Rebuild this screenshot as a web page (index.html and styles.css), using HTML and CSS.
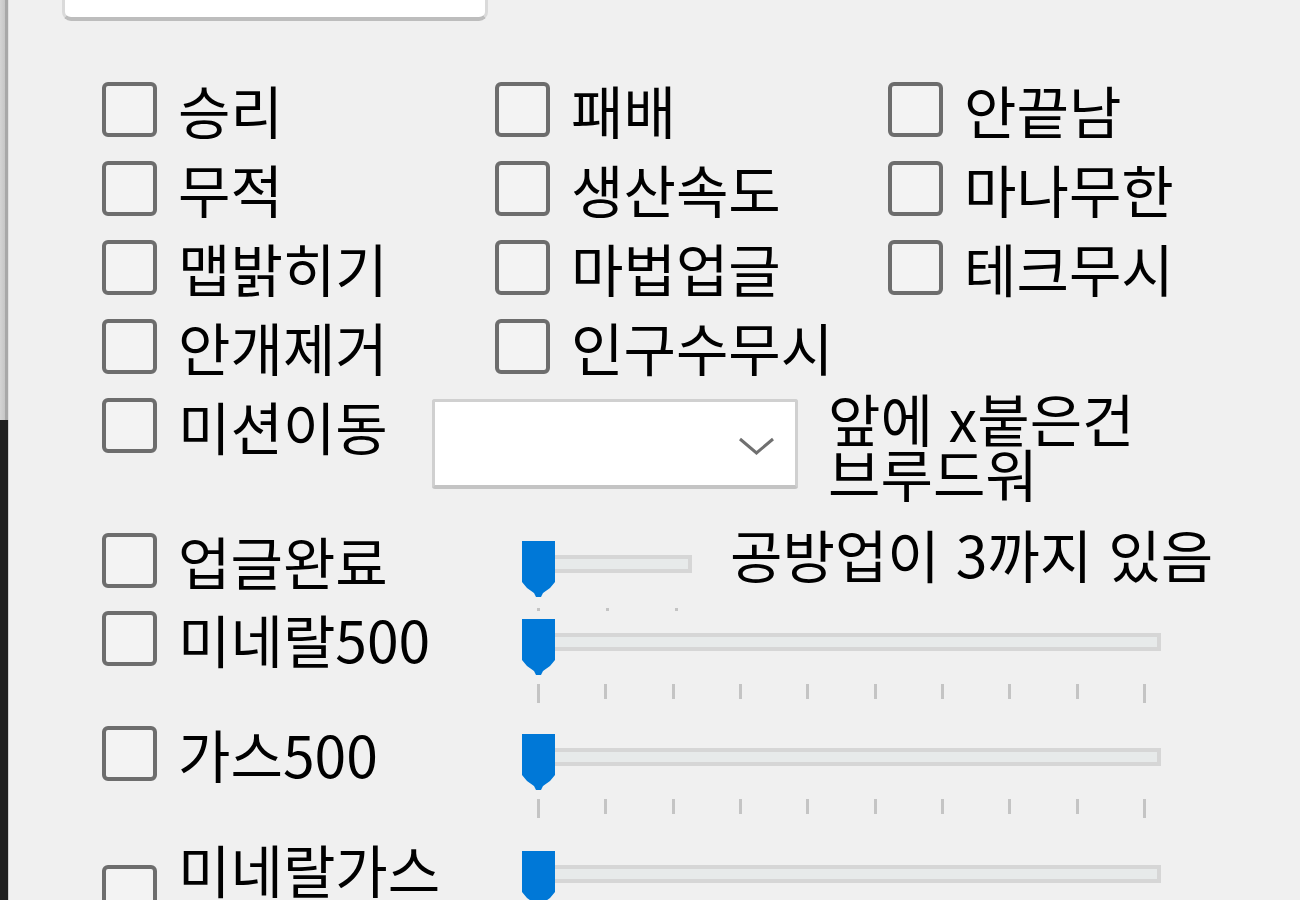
FILE: index.html
```html
<!DOCTYPE html>
<html lang="ko">
<head>
    <meta charset="UTF-8">
    <title>트레이너</title>
    <link rel="stylesheet" href="styles.css">
</head>
<body>
    <div class="window">
        <div class="edge">
            <div class="edge-top"></div>
            <div class="edge-bottom"></div>
        </div>

        <div class="panel">
            <div class="textbox"></div>

            <div class="options">
                <label class="check"><span class="box"></span><span>승리</span></label>
                <label class="check"><span class="box"></span><span>패배</span></label>
                <label class="check"><span class="box"></span><span>안끝남</span></label>
                <label class="check"><span class="box"></span><span>무적</span></label>
                <label class="check"><span class="box"></span><span>생산속도</span></label>
                <label class="check"><span class="box"></span><span>마나무한</span></label>
                <label class="check"><span class="box"></span><span>맵밝히기</span></label>
                <label class="check"><span class="box"></span><span>마법업글</span></label>
                <label class="check"><span class="box"></span><span>테크무시</span></label>
                <label class="check"><span class="box"></span><span>안개제거</span></label>
                <label class="check"><span class="box"></span><span>인구수무시</span></label>
            </div>

            <div class="row row-mission">
                <label class="check mission"><span class="box"></span><span>미션이동</span></label>
                <div class="combo">
                    <svg width="37" height="18" viewBox="0 0 37 18"><polyline points="2,2 18.5,16 35,2" fill="none" stroke="#707070" stroke-width="3"/></svg>
                </div>
                <p class="note">앞에 x붙은건<br>브루드워</p>
            </div>

            <div class="row row-upgrade">
                <label class="check slider-label"><span class="box"></span><span>업글완료</span></label>
                <div class="slider short">
                    <div class="rail">
                        <div class="track"></div>
                        <svg class="thumb" width="33" height="56" viewBox="0 0 33 56"><path d="M0 0H33V41L28 47L21 52L19 56H14L12 52L5 47L0 41Z" fill="#0078d7"/></svg>
                    </div>
                    <div class="ticks dots"><i></i><i></i><i></i></div>
                </div>
                <p class="hint">공방업이 3까지 있음</p>
            </div>

            <div class="row row-slider">
                <label class="check slider-label"><span class="box"></span><span>미네랄500</span></label>
                <div class="slider long">
                    <div class="rail">
                        <div class="track"></div>
                        <svg class="thumb" width="33" height="56" viewBox="0 0 33 56"><path d="M0 0H33V41L28 47L21 52L19 56H14L12 52L5 47L0 41Z" fill="#0078d7"/></svg>
                    </div>
                    <div class="ticks"><i></i><i></i><i></i><i></i><i></i><i></i><i></i><i></i><i></i><i></i></div>
                </div>
            </div>

            <div class="row row-slider">
                <label class="check slider-label"><span class="box"></span><span>가스500</span></label>
                <div class="slider long">
                    <div class="rail">
                        <div class="track"></div>
                        <svg class="thumb" width="33" height="56" viewBox="0 0 33 56"><path d="M0 0H33V41L28 47L21 52L19 56H14L12 52L5 47L0 41Z" fill="#0078d7"/></svg>
                    </div>
                    <div class="ticks"><i></i><i></i><i></i><i></i><i></i><i></i><i></i><i></i><i></i><i></i></div>
                </div>
            </div>

            <div class="row row-last">
                <label class="check slider-label tall"><span class="box"></span><span>미네랄가스</span></label>
                <div class="slider long">
                    <div class="rail">
                        <div class="track"></div>
                        <svg class="thumb" width="33" height="56" viewBox="0 0 33 56"><path d="M0 0H33V41L28 47L21 52L19 56H14L12 52L5 47L0 41Z" fill="#0078d7"/></svg>
                    </div>
                </div>
            </div>
        </div>
    </div>
</body>
</html>
```

FILE: styles.css
```css
body {
    margin: 0;
    background-color: #f0f0f0;
    font-family: "Noto Sans CJK KR", "Noto Sans", sans-serif;
    color: #000;
    overflow: hidden;
}
.window {
    display: flex;
    height: 900px;
}
.edge {
    width: 9px;
    display: flex;
    flex-direction: column;
}
.edge-top {
    height: 420px;
    background: linear-gradient(to right, #d4d4d4 0, #c6c6c6 5px, #a8a8a8 5px, #a8a8a8 8px, #e2e2e2 8px);
}
.edge-bottom {
    flex: 1;
    background: linear-gradient(to right, #1f1f1f 0, #1f1f1f 8px, #cfcfcf 8px);
}
.panel {
    flex: 1;
    padding-left: 93px;
}
.textbox {
    margin: -12px 0 0 -40px;
    width: 420px;
    height: 26px;
    background: #fff;
    border: 3px solid #dadada;
    border-bottom: 4px solid #bdbdbd;
    border-radius: 9px;
}
.options {
    margin-top: 61px;
    display: grid;
    grid-template-columns: 393px 393px 393px;
    grid-auto-rows: 79px;
}
.check {
    display: flex;
    align-items: flex-start;
    gap: 21px;
    font-size: 57px;
    line-height: 55px;
    height: 55px;
    white-space: nowrap;
}
.box {
    flex: none;
    width: 47px;
    height: 47px;
    border: 4px solid #6d6d6d;
    border-radius: 6px;
    background: #f3f3f3;
}
.row {
    display: flex;
    align-items: flex-start;
}
.row-mission {
    height: 135px;
}
.mission {
    width: 330px;
}
.combo {
    margin-top: 1px;
    width: 340px;
    height: 79px;
    background: #fff;
    border: 3px solid #d0d0d0;
    border-bottom: 4px solid #c4c4c4;
    border-radius: 3px;
    display: flex;
    justify-content: flex-end;
    align-items: center;
    padding: 4px 20px 0 0;
}
.note {
    margin: -8px 0 0 30px;
    font-size: 57px;
    line-height: 55px;
    white-space: nowrap;
}
.slider-label {
    width: 420px;
}
.row-upgrade {
    height: 78px;
}
.row-slider {
    height: 115px;
}
.slider {
    margin-top: 8px;
}
.slider.short {
    width: 170px;
}
.slider.long {
    width: 639px;
}
.rail {
    position: relative;
    height: 56px;
    padding-top: 14px;
    box-sizing: border-box;
}
.track {
    margin-left: 6px;
    height: 10px;
    border: 4px solid #d6d6d6;
    background: #e7eaea;
}
.thumb {
    position: absolute;
    left: 0;
    top: 0;
}
.ticks {
    margin: 9px 0 0 15px;
    width: 609px;
    display: flex;
    justify-content: space-between;
    align-items: flex-start;
}
.ticks i {
    width: 3px;
    height: 15px;
    background: #c4c4c4;
}
.ticks i:first-child, .ticks i:last-child {
    height: 19px;
}
.ticks.dots {
    margin-top: 11px;
    width: 141px;
}
.ticks.dots i {
    height: 3px;
}
.hint {
    margin: -7px 0 0 38px;
    font-size: 57px;
    line-height: 55px;
    white-space: nowrap;
}
.row-last .slider {
    margin-top: 10px;
}
.tall .box {
    margin-top: 24px;
}
```
